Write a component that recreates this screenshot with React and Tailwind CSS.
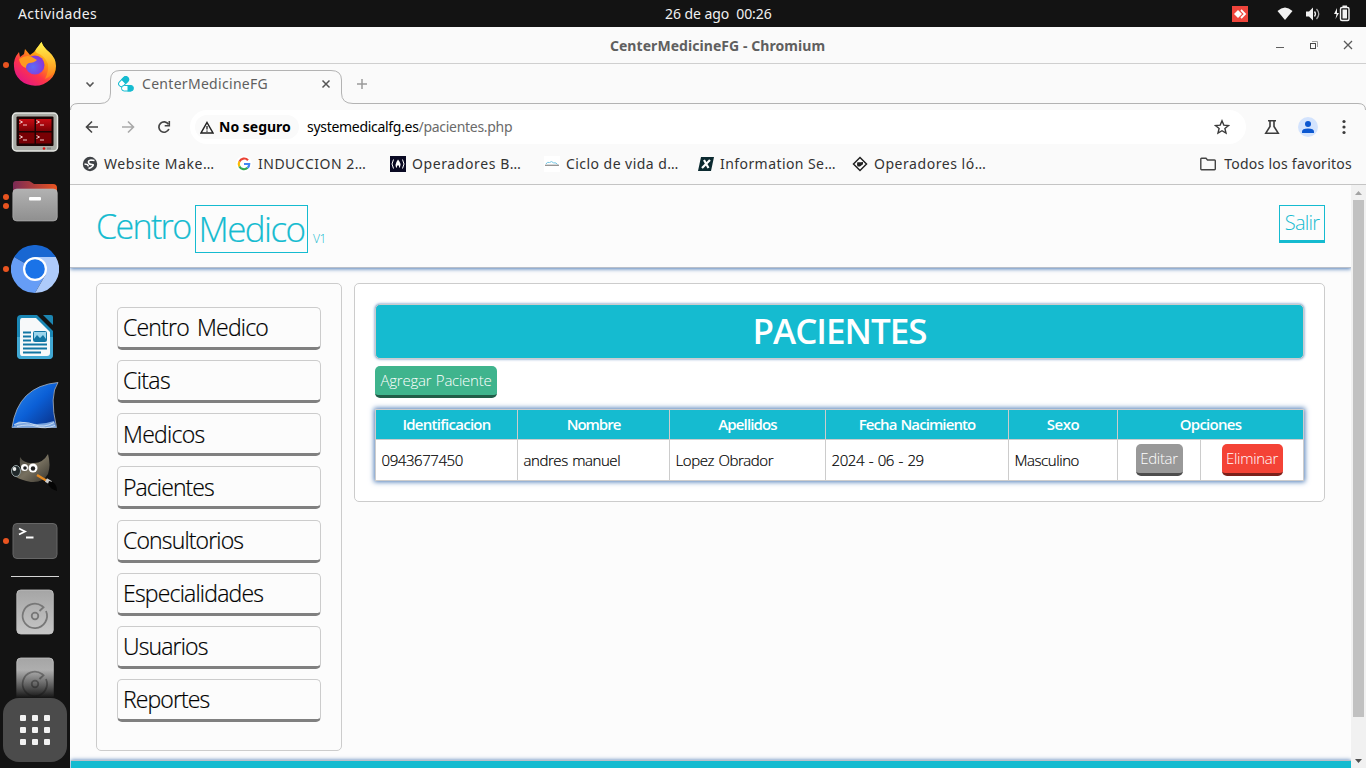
import React from "react";

const dockItems = [
  { id: "firefox", dots: 1 },
  { id: "terminator", dots: 0 },
  { id: "files", dots: 2 },
  { id: "chromium", dots: 1 },
  { id: "writer", dots: 0 },
  { id: "wireshark", dots: 0 },
  { id: "gimp", dots: 0 },
  { id: "terminal", dots: 1 },
];

function Firefox() {
  return (
    <svg width="48" height="48" viewBox="0 0 48 48">
      <defs>
        <linearGradient id="ffa" x1="0.85" y1="0.1" x2="0.2" y2="0.95">
          <stop offset="0" stopColor="#fff44f" />
          <stop offset="0.35" stopColor="#ff980e" />
          <stop offset="0.65" stopColor="#ff3647" />
          <stop offset="1" stopColor="#e31587" />
        </linearGradient>
        <linearGradient id="ffb" x1="0.5" y1="0" x2="0.5" y2="1">
          <stop offset="0" stopColor="#fff44f" />
          <stop offset="0.5" stopColor="#ffbd2e" />
          <stop offset="1" stopColor="#ff7a1a" />
        </linearGradient>
        <radialGradient id="ffc" cx="0.4" cy="0.6" r="0.6">
          <stop offset="0" stopColor="#5b6df8" />
          <stop offset="1" stopColor="#8a35d8" />
        </radialGradient>
      </defs>
      <path d="M8 11 9 16 13 13 14 8 19 14 Q24 11 26 7L30.500 1Q32 6 38 11 45 17 45 25A21 19.500 0 0 1 3 25.500Q2 18 8 11Z" fill="url(#ffa)" />
      <path d="M30.500 1Q32 6 38 11 45 17 44 27 42 35 34 38 38 30 37 23 34 15 26 12 23 10 26 7Z" fill="url(#ffb)" />
      <circle cx="24" cy="24" r="9.500" fill="url(#ffc)" />
      <path d="M8 18Q14 14 20 15.500L26 19Q23 22 18 22 15 23 15 27 9 25 8 18Z" fill="#ff9a20" />
    </svg>
  );
}

function Terminator() {
  return (
    <svg width="48" height="48" viewBox="0 0 48 48">
      <defs>
        <linearGradient id="tma" x1="0" y1="0" x2="0" y2="1">
          <stop offset="0" stopColor="#c80c14" />
          <stop offset="1" stopColor="#7a0005" />
        </linearGradient>
      </defs>
      <rect x="1.500" y="4" width="45" height="38" rx="4" fill="#a9aba5" stroke="#e6e7e3" strokeWidth="1.500" />
      <rect x="5.500" y="7.500" width="37" height="29.500" rx="1" fill="#1b0505" />
      <rect x="8" y="10" width="15.500" height="12" fill="url(#tma)" />
      <rect x="25" y="10" width="15.500" height="12" fill="url(#tma)" />
      <rect x="8" y="23.500" width="15.500" height="11" fill="#780004" />
      <rect x="25" y="23.500" width="15.500" height="11" fill="#780004" />
      <path d="M8.500 11.500l3 1.500-3 1.500M12 16h4M25.500 11.500l3 1.500-3 1.500M29 16h4M8.500 26.500l3 1.500-3 1.500M12 31h4M25.500 26.500l3 1.500-3 1.500M29 31h4" stroke="#f0c8c8" fill="none" />
      <circle cx="33" cy="39.500" r="1.300" fill="#e01010" />
      <rect x="36" y="38.500" width="4" height="2" fill="#888" />
    </svg>
  );
}

function Files() {
  return (
    <svg width="48" height="48" viewBox="0 0 48 48">
      <defs>
        <linearGradient id="fla" x1="0" x2="1">
          <stop offset="0" stopColor="#7a2a55" />
          <stop offset="1" stopColor="#e95420" />
        </linearGradient>
        <linearGradient id="flb" x1="0" y1="0" x2="0" y2="1">
          <stop offset="0" stopColor="#b2b2b2" />
          <stop offset="1" stopColor="#8f8f8f" />
        </linearGradient>
      </defs>
      <path d="M2 16V7q0-3 3-3h12q2 0 3 1l3 2h19q4 0 4 4v8H2z" fill="url(#fla)" />
      <rect x="1.800" y="12" width="44.500" height="32" rx="4" fill="url(#flb)" stroke="#bbb" strokeWidth=".6" />
      <rect x="18" y="20" width="12" height="3.500" rx="1" fill="#fff" />
    </svg>
  );
}

function Chromium() {
  return (
    <svg width="48" height="48" viewBox="0 0 48 48">
      <path d="M24 24 3.200 12A24 24 0 0 1 44.800 12Z" fill="#1967d2" />
      <path d="M24 24 3.200 12A24 24 0 0 0 24 48L34.400 30Z" fill="#669df6" />
      <path d="M24 12H44.800A24 24 0 0 1 24 48L34.400 30Z" fill="#aecbfa" />
      <circle cx="24" cy="24" r="12" fill="#fff" />
      <circle cx="24" cy="24" r="9.800" fill="#1a73e8" />
    </svg>
  );
}

function Writer() {
  return (
    <svg width="48" height="48" viewBox="0 0 48 48">
      <path d="M10 2h16l16 16v23q0 5-4 5H10q-4 0-4-5V6q0-4 4-4z" fill="#1a87b5" />
      <path d="M6 24h36v18q0 4-4 4H10q-4 0-4-4z" fill="#41a8d3" />
      <path d="M11 5h14l14 14v21q0 3-3 3H11q-2 0-2-3V8q0-3 2-3z" fill="#f7f9fa" />
      <path d="M32 2h8q2 0 2 2v8z" fill="#1c86b2" />
      <path d="M12 19.500h8M12 23.500h8M12 27.500h8M12 31.500h24M12 35.500h24M12 39.500h18" stroke="#1276a3" strokeWidth="2" />
      <rect x="22.500" y="18.500" width="13" height="10" rx="1" fill="#9bd5ec" stroke="#1276a3" />
      <path d="M23 28v-2l3-4 3 3 3-3 3 4v2z" fill="#1276a3" />
    </svg>
  );
}

function Wireshark() {
  return (
    <svg width="48" height="48" viewBox="0 0 48 48">
      <defs>
        <linearGradient id="wsa" x1="0" y1="0" x2="1" y2="1">
          <stop offset="0" stopColor="#2f8df0" />
          <stop offset="0.5" stopColor="#0b5fd6" />
          <stop offset="1" stopColor="#0a2c80" />
        </linearGradient>
      </defs>
      <path d="M1 46.500Q7 5 47 1.500 38 14 45.500 46.500Z" fill="url(#wsa)" stroke="#aab4c0" strokeWidth=".8" />
      <path d="M3 45Q6 39 12 41T26 43 43 40L45.500 46.500H1Z" fill="#7ca6df" />
      <path d="M3 43.500q10-4 20 0t20-2M6 45.500q12-3 20 0t18-1" stroke="#dbe7f5" fill="none" strokeWidth=".8" />
    </svg>
  );
}

function Gimp() {
  return (
    <svg width="48" height="48" viewBox="0 0 48 48">
      <defs>
        <linearGradient id="gpa" x1="0" y1="0" x2="1" y2="1">
          <stop offset="0" stopColor="#403f39" />
          <stop offset="0.5" stopColor="#77705f" />
          <stop offset="1" stopColor="#37342d" />
        </linearGradient>
      </defs>
      <path d="M9 8Q13 15 23 14 32 14 37 5 40 16 37 25 32 34 20 33 10 31 5 28L10 20Q8 14 9 8Z" fill="url(#gpa)" />
      <ellipse cx="5" cy="22" rx="4.500" ry="5.500" fill="#20282a" stroke="#93a0a2" />
      <ellipse cx="3.500" cy="20" rx="1.800" ry="2" fill="#eee" />
      <circle cx="13.500" cy="18.500" r="3.500" fill="#fff" />
      <circle cx="22" cy="19" r="4.500" fill="#fff" />
      <circle cx="14" cy="19" r="1.800" fill="#222" />
      <circle cx="22" cy="19.500" r="2.200" fill="#222" />
      <path d="M26 26l10 6" stroke="#e58a22" strokeWidth="2.500" />
      <path d="M35 31l5 3" stroke="#ccc" strokeWidth="4" />
      <path d="M38 32q8 1 8 10-7-2-9-7z" fill="#050505" />
    </svg>
  );
}

function Terminal() {
  return (
    <svg width="48" height="48" viewBox="0 0 48 48">
      <rect x="2" y="6.500" width="44" height="35" rx="4" fill="#4c4c4c" stroke="#666" />
      <path d="M8 11.500l6 3-6 3M15 20.500h7.500" stroke="#fff" strokeWidth="1.800" fill="none" />
    </svg>
  );
}

function Disk({ id }) {
  return (
    <svg width="48" height="48" viewBox="0 0 48 48">
      <defs>
        <linearGradient id={id} x1="0" y1="0" x2="0" y2="1">
          <stop offset="0" stopColor="#a5a5a5" />
          <stop offset="1" stopColor="#c6c6c6" />
        </linearGradient>
      </defs>
      <rect x="5.800" y="2" width="36.500" height="44" rx="4" fill={`url(#${id})`} stroke="#c4c4c4" strokeWidth=".8" />
      <path d="M35 23A12.200 12.200 0 1 1 31 18L32.500 19.200 28.500 23" stroke="#777" strokeWidth="1.800" fill="none" />
      <circle cx="24" cy="28" r="3.300" fill="none" stroke="#777" strokeWidth="1.800" />
    </svg>
  );
}

const dockIcons = {
  firefox: Firefox,
  terminator: Terminator,
  files: Files,
  chromium: Chromium,
  writer: Writer,
  wireshark: Wireshark,
  gimp: Gimp,
  terminal: Terminal,
};

function Dock() {
  return (
    <aside className="flex h-[741px] w-[70px] shrink-0 flex-col overflow-hidden bg-[#131313] pt-1">
      {dockItems.map((item) => {
        const Icon = dockIcons[item.id];
        return (
          <div key={item.id} className="flex h-[68px] shrink-0 items-center">
            <div className="flex w-[11px] flex-col gap-[3px] pl-[3px]">
              {item.dots > 0 && <span className="size-1.5 rounded-full bg-[#e95420]" />}
              {item.dots > 1 && <span className="size-1.5 rounded-full bg-[#e95420]" />}
            </div>
            <Icon />
          </div>
        );
      })}
      <div className="mt-px ml-[11px] h-px w-12 shrink-0 bg-[#d5d5d5]" />
      <div className="mt-[11px] flex h-12 shrink-0 justify-center">
        <Disk id="diskA" />
      </div>
      <div className="relative mt-5 flex h-[42px] shrink-0 justify-center overflow-hidden">
        <Disk id="diskB" />
        <div className="absolute inset-x-0 bottom-0 h-[28px] bg-linear-to-b from-transparent to-[#131313]" />
      </div>
      <div className="ml-[3px] grid h-16 w-16 shrink-0 grid-cols-3 content-center justify-center gap-1.5 rounded-2xl bg-[#4b4b4b] px-[17px]">
        {Array.from({ length: 9 }, (_, i) => (
          <span key={i} className="size-1.5 rounded-[1px] bg-[#f2f2f2]" />
        ))}
      </div>
    </aside>
  );
}

function TopBar() {
  return (
    <header className="flex h-[27px] items-center bg-[#131313] text-[14px] text-[#f0f0f0]">
      <div className="w-[665px] pl-[18px] tracking-[0.4px]">Actividades</div>
      <div className="w-[120px] whitespace-pre tracking-[-0.070px]">26 de ago  00:26</div>
      <div className="flex flex-1 items-center justify-end pr-4">
        <svg width="16" height="16" viewBox="0 0 16 16" className="mr-[29px]">
          <rect width="16" height="16" fill="#ef443b" />
          <path d="M2 8l4-4 4 4-4 4z" fill="#fff" />
          <path d="M9 4l4 4-4 4" stroke="#fff" strokeWidth="1.800" fill="none" />
        </svg>
        <svg width="16" height="14" viewBox="0 0 16 14" className="mr-3">
          <path d="M.5 4Q8-3 15.500 4L8 13z" fill="#f2f2f2" />
        </svg>
        <svg width="16" height="16" viewBox="0 0 16 16" className="mr-3">
          <path d="M1 5.500h3L8 1.500v13L4 10.500H1z" fill="#f2f2f2" />
          <path d="M9.500 5.500q2 2.500 0 5" stroke="#f2f2f2" strokeWidth="1.300" fill="none" />
          <path d="M11.500 3q4.500 5 0 10" stroke="#aaa" strokeWidth="1.300" fill="none" />
        </svg>
        <svg width="17" height="17" viewBox="0 0 17 17">
          <path d="M4 3L1 9h2.500L2.500 14 6 8H4z" fill="#f2f2f2" />
          <rect x="7.500" y="2.500" width="8.500" height="13" rx="1.500" stroke="#f2f2f2" strokeWidth="1.400" fill="none" />
          <rect x="9.500" y="4.500" width="4.500" height="9" fill="#f2f2f2" />
          <rect x="9.500" y="0.500" width="4.500" height="2" fill="#f2f2f2" />
        </svg>
      </div>
    </header>
  );
}

function TitleBar() {
  return (
    <div className="flex h-[37px] items-center border-b border-[#cfcfcf] bg-[#fafafa]">
      <div className="w-[155px]" />
      <div className="flex-1 text-center text-[14px] font-bold tracking-[0.06px] text-[#5f5f5f]">CenterMedicineFG - Chromium</div>
      <div className="flex w-[156px] justify-end gap-[22px] pr-3">
        <svg width="12" height="12" viewBox="0 0 12 12"><path d="M2 8.500h8" stroke="#5f5f5f" /></svg>
        <svg width="12" height="12" viewBox="0 0 12 12">
          <path d="M4 2.500h5.500V8" stroke="#a0a0a0" fill="none" />
          <rect x="2.500" y="4.500" width="5" height="5" stroke="#4a4a4a" fill="none" />
        </svg>
        <svg width="12" height="12" viewBox="0 0 12 12"><path d="M2 2l8 8M10 2l-8 8" stroke="#5a5a5a" strokeWidth="1.300" /></svg>
      </div>
    </div>
  );
}

function PillsIcon() {
  return (
    <svg width="16" height="16" viewBox="0 0 16 16" className="shrink-0">
      <g transform="rotate(-45 5.500 6)">
        <rect x="0" y="3" width="11.500" height="5.600" rx="2.800" fill="#fff" stroke="#15bbd0" />
        <path d="M5.500 2.500h3.500a3.300 3.300 0 0 1 0 6.600H5.500z" fill="#15bbd0" />
      </g>
      <rect x="3.500" y="9.500" width="12" height="5.500" rx="2.700" fill="#fff" stroke="#15bbd0" />
      <path d="M9.500 9h3a3.300 3.300 0 0 1 0 6.500h-3z" fill="#15bbd0" />
    </svg>
  );
}

function TabStrip() {
  return (
    <div className="relative h-10 bg-[#fafafa]">
      <svg width="1296" height="46" viewBox="0 0 1296 46" className="absolute top-0 left-0">
        <path
          d="M0.500 46Q0.500 39.500 8 39.500H30Q40.500 39.500 40.500 29V16Q40.500 6.500 50 6.500H261Q271.500 6.500 271.500 16V29Q271.500 39.500 283 39.500H1288Q1295.500 39.500 1295.500 46"
          fill="none"
          stroke="#b3b3b3"
        />
      </svg>
      <div className="relative flex h-10 items-center text-[#5f5f5f]">
        <svg width="10" height="10" viewBox="0 0 10 10" className="ml-[15px]"><path d="M1.500 3.500L5 7l3.500-3.500" stroke="#555" strokeWidth="1.600" fill="none" /></svg>
        <div className="ml-[23px] flex w-[213px] items-center">
          <PillsIcon />
          <span className="ml-2 flex-1 pb-0.5 text-[14px] tracking-[0.3px] whitespace-nowrap">CenterMedicineFG</span>
          <svg width="10" height="10" viewBox="0 0 10 10"><path d="M1.500 1.500l7 7M8.500 1.500l-7 7" stroke="#555" strokeWidth="1.500" /></svg>
        </div>
        <svg width="12" height="12" viewBox="0 0 12 12" className="ml-[25px]"><path d="M6 1v10M1 6h10" stroke="#9a9a9a" strokeWidth="1.500" /></svg>
      </div>
    </div>
  );
}

function Toolbar() {
  return (
    <div className="flex h-[46px] items-center bg-[#fafafa]">
      <svg width="14" height="14" viewBox="0 0 14 14" className="ml-[15px]"><path d="M13 7H2M7 1.500L1.500 7 7 12.500" stroke="#444" strokeWidth="1.600" fill="none" /></svg>
      <svg width="14" height="14" viewBox="0 0 14 14" className="ml-[22px]"><path d="M1 7h11M7 1.500L12.500 7 7 12.500" stroke="#a9a9a9" strokeWidth="1.600" fill="none" /></svg>
      <svg width="14" height="14" viewBox="0 0 14 14" className="ml-[22px]">
        <path d="M11.900 9A5.200 5.200 0 1 1 11.500 4.300" stroke="#444" strokeWidth="1.700" fill="none" />
        <path d="M12.300 1v4.800H7.700" stroke="#444" strokeWidth="1.600" fill="none" />
      </svg>
      <div className="ml-[19px] flex h-[34px] w-[1056px] items-center rounded-full bg-white pl-[5px] text-[14px]">
        <div className="flex h-6 w-[104px] items-center rounded-full bg-[#fafafa] pl-[5px]">
          <svg width="14" height="13" viewBox="0 0 14 13"><path d="M7 1.500L13 12H1z" stroke="#222" strokeWidth="1.500" fill="none" /><path d="M7 5v3.500M7 9.500v1.300" stroke="#222" strokeWidth="1.300" /></svg>
          <span className="ml-[5px] pb-0.5 font-bold whitespace-nowrap text-black">No seguro</span>
        </div>
        <span className="ml-2 flex-1 pb-0.5 whitespace-nowrap tracking-[-0.3px] text-black">
          systemedicalfg.es<span className="text-[#6b6b6b]">/pacientes.php</span>
        </span>
        <svg width="16" height="16" viewBox="0 0 16 16" className="mr-4"><path d="M8 1.800l1.800 4.300 4.700.4-3.600 3 1.100 4.600L8 11.700l-4 2.400 1.100-4.600-3.600-3 4.700-.4z" stroke="#3a3a3a" strokeWidth="1.400" fill="none" /></svg>
      </div>
      <svg width="16" height="16" viewBox="0 0 16 16" className="ml-[18px]"><path d="M4 1.700h8M6 2v5.500L1.800 14.200h12.400L10 7.500V2" stroke="#3c3c3c" strokeWidth="1.600" fill="none" /></svg>
      <svg width="20" height="20" viewBox="0 0 20 20" className="ml-[18px]">
        <circle cx="10" cy="10" r="10" fill="#d3e3fd" />
        <circle cx="10" cy="7" r="3" fill="#0b57d0" />
        <path d="M4 16v-1.500Q4 11.500 10 11.500T16 14.500V16z" fill="#0b57d0" />
      </svg>
      <svg width="4" height="16" viewBox="0 0 4 16" className="ml-6"><circle cx="2" cy="2.500" r="1.600" fill="#3c3c3c" /><circle cx="2" cy="8" r="1.600" fill="#3c3c3c" /><circle cx="2" cy="13.500" r="1.600" fill="#3c3c3c" /></svg>
    </div>
  );
}

const bookmarks = [
  {
    label: "Website Make…",
    track: "tracking-[0.580px]",
    icon: (
      <svg width="16" height="16" viewBox="0 0 16 16">
        <circle cx="8" cy="8" r="7.200" fill="#3f4246" />
        <path d="M12.500 4.500L9 4Q6 4.500 6.500 6.500T10 8.500 9 11.500L6.500 12.500M2.500 8l3 .6 1 1.700" stroke="#fff" strokeWidth="1.500" fill="none" />
      </svg>
    ),
  },
  {
    label: "INDUCCION 2…",
    track: "tracking-[0.5px]",
    icon: (
      <svg width="16" height="16" viewBox="0 0 16 16">
        <circle cx="8" cy="8" r="8" fill="#fff" />
        <path d="M12 4.200A5.200 5.200 0 0 0 3.400 5.600" stroke="#ea4335" strokeWidth="2.200" fill="none" />
        <path d="M3.400 5.600a5.200 5.200 0 0 0 0 4.800" stroke="#fbbc05" strokeWidth="2.200" fill="none" />
        <path d="M3.400 10.400a5.200 5.200 0 0 0 8.200 1.400" stroke="#34a853" strokeWidth="2.200" fill="none" />
        <path d="M8 8h5.200a5.200 5.200 0 0 1-1.600 3.800" stroke="#4285f4" strokeWidth="2.200" fill="none" />
      </svg>
    ),
  },
  {
    label: "Operadores B…",
    track: "tracking-[0.6px]",
    icon: (
      <svg width="16" height="16" viewBox="0 0 16 16">
        <rect width="16" height="16" fill="#0a0a23" />
        <path d="M3.500 3.500q-3 4.500 0 9M12.500 3.500q3 4.500 0 9" stroke="#fff" fill="none" />
        <path d="M8 3.500q3 4 2.500 5.500-.3 2.500-1.500 3 .5-2.500-1-3-1.500.8-1 3-1.500-.7-1.500-3Q6 6 8 3.500z" fill="#fff" />
      </svg>
    ),
  },
  {
    label: "Ciclo de vida d…",
    track: "tracking-[0.450px]",
    icon: (
      <svg width="16" height="16" viewBox="0 0 16 16">
        <rect width="16" height="16" fill="#fff" />
        <path d="M2 8q1-2.500 3.500-1.500 2-2 4 .3 3-.5 4 1.700" stroke="#74c7e5" fill="none" />
        <path d="M1 9.300h14" stroke="#919191" strokeWidth="1.300" />
      </svg>
    ),
  },
  {
    label: "Information Se…",
    track: "tracking-[0.430px]",
    icon: (
      <svg width="16" height="16" viewBox="0 0 16 16">
        <path d="M3 1h13l-3 14H0z" fill="#0c2a30" />
        <path d="M6 4l4.500 8M12 4l-8 8" stroke="#fff" strokeWidth="2.200" />
      </svg>
    ),
  },
  {
    label: "Operadores ló…",
    track: "tracking-[0.540px]",
    icon: (
      <svg width="16" height="16" viewBox="0 0 16 16">
        <path d="M8 1.500L14.500 8 8 14.500 1.500 8z" fill="#fff" stroke="#222" strokeWidth="1.500" />
        <path d="M5.300 6.300h3.200L11 6v2.300L8 10.500H5.500L5 8.500z" fill="#222" />
      </svg>
    ),
  },
];

function BookmarksBar() {
  return (
    <div className="flex h-[35px] items-start border-b border-[#c4c4c4] bg-[#fafafa] pl-3 text-[14px] text-[#333]">
      {bookmarks.map((b) => (
        <div key={b.label} className="flex h-7 w-[154px] items-center gap-1.5">
          {b.icon}
          <span className={`pb-0.5 whitespace-nowrap ${b.track}`}>{b.label}</span>
        </div>
      ))}
      <div className="ml-auto flex h-7 items-center gap-2 pr-[14px]">
        <svg width="16" height="14" viewBox="0 0 16 14"><path d="M.8 12V2Q.8 1.300 1.500 1.300H6L7.500 3h7q.8 0 .8.800V12q0 .7-.8.700h-13Q.8 12.700.8 12z" stroke="#444" strokeWidth="1.400" fill="none" /></svg>
        <span className="pb-0.5 whitespace-nowrap tracking-[0.250px]">Todos los favoritos</span>
      </div>
    </div>
  );
}

const menu = [
  { label: "Centro Medico", track: "tracking-[-0.8px]" },
  { label: "Citas", track: "tracking-[-0.6px]" },
  { label: "Medicos", track: "tracking-[-0.7px]" },
  { label: "Pacientes", track: "tracking-[-0.9px]" },
  { label: "Consultorios", track: "tracking-[-0.850px]" },
  { label: "Especialidades", track: "tracking-[-0.8px]" },
  { label: "Usuarios", track: "tracking-[-0.850px]" },
  { label: "Reportes", track: "tracking-[-0.9px]" },
];

function Sidebar() {
  return (
    <nav className="flex h-[468px] w-[246px] shrink-0 flex-col gap-[10.170px] rounded-[5px] border border-[#ccc] px-5 pt-[23px]">
      {menu.map(({ label, track }) => (
        <a
          key={label}
          className={`flex h-[43px] shrink-0 items-center rounded-[5px] border border-b-[3px] border-[#ccc] border-b-[#808080] pl-[5px] text-[23px] whitespace-pre text-black [-webkit-text-stroke:0.2px] [word-spacing:3px] ${track}`}
        >
          {label}
        </a>
      ))}
    </nav>
  );
}

const columns = [
  { label: "Identificacion", span: 1, track: "tracking-[-0.720px]" },
  { label: "Nombre", span: 1, track: "tracking-[-1px]" },
  { label: "Apellidos", span: 1, track: "tracking-[-0.850px]" },
  { label: "Fecha Nacimiento", span: 1, track: "tracking-[-0.9px]" },
  { label: "Sexo", span: 1, track: "tracking-[-0.5px]" },
  { label: "Opciones", span: 2, track: "tracking-[-0.720px]" },
];

const patient = ["0943677450", "andres manuel", "Lopez Obrador", "2024-06-29", "Masculino"];

function Value({ text }) {
  return text.split("-").map((part, i) => (
    <React.Fragment key={i}>
      {i > 0 && <span className="px-[4.600px]">-</span>}
      {part}
    </React.Fragment>
  ));
}

function PatientsTable() {
  return (
    <table className="mt-[11px] w-[929px] table-fixed border-collapse text-[15px] shadow-[0_0_5px_1px_#4f7db8]">
      <colgroup>
        <col className="w-[142px]" />
        <col className="w-[152px]" />
        <col className="w-[156px]" />
        <col className="w-[183px]" />
        <col className="w-[109px]" />
        <col className="w-[83px]" />
        <col className="w-[103px]" />
      </colgroup>
      <thead>
        <tr className="h-[30px] bg-[#15bbd0] text-white">
          {columns.map((c) => (
            <th key={c.label} colSpan={c.span} className={`border border-[#ccc] p-0 font-semibold [word-spacing:1px] ${c.track}`}>
              {c.label}
            </th>
          ))}
        </tr>
      </thead>
      <tbody>
        <tr className="h-[41px] bg-white text-black">
          {patient.map((v) => (
            <td key={v} className="border border-[#ccc] py-0 pr-0 pl-[5.500px] tracking-[-0.430px] whitespace-nowrap [-webkit-text-stroke:0.2px] [word-spacing:1px]">
              <Value text={v} />
            </td>
          ))}
          <td className="border border-[#ccc] p-0">
            <button className="mx-auto flex h-8 w-[47px] items-center justify-center rounded-[5px] border-b-[3px] border-[#4d4d4d] bg-[#999] tracking-[-0.3px] text-white">Editar</button>
          </td>
          <td className="border border-[#ccc] p-0">
            <button className="mx-auto flex h-8 w-[61px] items-center justify-center rounded-[5px] border-b-[3px] border-[#7c211b] bg-[#f44336] tracking-[-0.3px] text-white">Eliminar</button>
          </td>
        </tr>
      </tbody>
    </table>
  );
}

function Page() {
  return (
    <div className="flex h-[583px] w-[1281px] flex-col overflow-hidden bg-[#fcfcfc] font-['Open_Sans','Noto_Sans',sans-serif] font-light">
      <header className="flex h-[83px] shrink-0 items-start justify-between border-b border-[#b9bfc9] px-[26px] text-[#15bbd0] shadow-[0_1px_4px_#4f7db8]">
        <div className="flex items-start pt-5">
          <span className="w-[99px] text-[34px] leading-[42px] tracking-[-1.650px] whitespace-nowrap [-webkit-text-stroke:0.2px]">Centro</span>
          <span className="flex h-[48px] w-[113px] items-center justify-center border border-[#15bbd0] text-[35px] leading-[46px] tracking-[-1.550px] [-webkit-text-stroke:0.2px]">Medico</span>
          <span className="ml-[5px] pt-[25px] text-[12px] leading-[18px] tracking-[-0.5px]">V1</span>
        </div>
        <a className="mt-5 flex h-[38px] w-[46px] items-center justify-center border border-b-[3px] border-[#15bbd0] text-[20px] tracking-[-0.8px]">Salir</a>
      </header>
      <div className="flex h-[492px] shrink-0 items-start gap-3 pt-[15px] pl-[26px]">
        <Sidebar />
        <main className="h-[219px] w-[971px] shrink-0 rounded-[5px] border border-[#ccc] bg-white px-5 pt-5">
          <h1 className="flex h-[55px] items-center justify-center rounded-[5px] border border-[#ccc] bg-[#15bbd0] text-[35px] font-semibold tracking-[-1px] text-white shadow-[0_0_3px_#4f7db8]">
            PACIENTES
          </h1>
          <button className="mt-[7px] flex h-8 w-[122px] items-center justify-center rounded-[5px] border-b-[3px] border-[#205d48] bg-[#3fb48d] text-[15px] tracking-[-0.250px] whitespace-nowrap text-white [word-spacing:1px]">
            Agregar Paciente
          </button>
          <PatientsTable />
        </main>
      </div>
      <footer className="ml-px h-5 shrink-0 border-t border-[#b9bfc9] bg-[#15bbd0] shadow-[0_0_4px_#4f7db8]" />
    </div>
  );
}

function Scrollbar() {
  return (
    <div className="flex h-[583px] w-[15px] flex-col items-center bg-[#f1f1f1]">
      <svg width="15" height="15" viewBox="0 0 15 15"><path d="M4 10h7L7.500 6z" fill="#a3a3a3" /></svg>
      <div className="h-[517px] w-[11px] bg-[#c1c1c1]" />
      <svg width="15" height="15" viewBox="0 0 15 15" className="mt-auto"><path d="M4 6h7L7.500 10z" fill="#505050" /></svg>
    </div>
  );
}

export default function App() {
  return (
    <div className="h-[768px] w-[1366px] overflow-hidden bg-[#131313] font-['Noto_Sans',sans-serif]">
      <TopBar />
      <div className="flex">
        <Dock />
        <div className="w-[1296px]">
          <TitleBar />
          <TabStrip />
          <Toolbar />
          <BookmarksBar />
          <div className="flex">
            <Page />
            <Scrollbar />
          </div>
        </div>
      </div>
    </div>
  );
}
